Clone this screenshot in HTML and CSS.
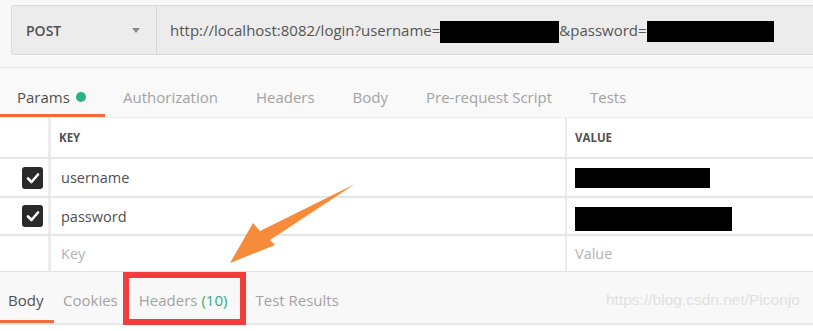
FILE: index.html
```html
<!DOCTYPE html>
<html>
<head>
<meta charset="utf-8">
<link rel="stylesheet" href="styles.css">
</head>
<body>
<div class="page">
  <div class="top">
    <div class="reqbar">
      <div class="method"><span>POST</span><span class="caret"></span></div>
      <div class="url">http://localhost:8082/login?username=<span class="redact r1"></span>&amp;password=<span class="redact r2"></span></div>
    </div>
  </div>
  <div class="tabs">
    <div class="tab active">Params <span class="dot"></span></div>
    <div class="tab">Authorization</div>
    <div class="tab">Headers</div>
    <div class="tab">Body</div>
    <div class="tab">Pre-request Script</div>
    <div class="tab">Tests</div>
  </div>
  <div class="table">
    <div class="row head">
      <div class="cb"></div>
      <div class="key">KEY</div>
      <div class="val">VALUE</div>
    </div>
    <div class="row r-user">
      <div class="cb"><span class="check"><svg viewBox="0 0 20 20" width="20" height="20"><path d="M5 10.5 L8.5 14 L15 6.5" fill="none" stroke="#fff" stroke-width="2.6" stroke-linecap="round" stroke-linejoin="round"/></svg></span></div>
      <div class="key">username</div>
      <div class="val"><span class="redact v1"></span></div>
    </div>
    <div class="row r-pass">
      <div class="cb"><span class="check"><svg viewBox="0 0 20 20" width="20" height="20"><path d="M5 10.5 L8.5 14 L15 6.5" fill="none" stroke="#fff" stroke-width="2.6" stroke-linecap="round" stroke-linejoin="round"/></svg></span></div>
      <div class="key">password</div>
      <div class="val"><span class="redact v2"></span></div>
    </div>
    <div class="row r-empty">
      <div class="cb"></div>
      <div class="key ph">Key</div>
      <div class="val ph">Value</div>
    </div>
  </div>
  <div class="resp">
    <div class="rtabs">
      <div class="rtab active">Body</div>
      <div class="rtab">Cookies</div>
      <div class="rtab">Headers <span class="count">(10)</span></div>
      <div class="rtab">Test Results</div>
      <div class="watermark">https://blog.csdn.net/Piconjo</div>
    </div>
  </div>
  <div class="redbox"></div>
  <svg class="arrow" width="130" height="85" viewBox="0 0 130 85">
    <polygon points="125,1 40,57 45,62 0,80 23,40 30,48" fill="#f68b3a"/>
  </svg>
</div>
</body>
</html>
```
FILE: styles.css
```css
* { box-sizing: border-box; }
html, body { margin: 0; padding: 0; background: #fff; }
body { font-family: "Open Sans", "Noto Sans", sans-serif; color: #505050; }
.page { position: relative; width: 813px; height: 331px; overflow: hidden; background: #fff; }

.top { height: 68px; background: #f8f8f8; padding: 5px 0 0 11px; border-bottom: 1px solid #e3e3e3; }
.reqbar { display: flex; height: 50px; background: #ececec; border: 1px solid #dadada; border-right: none; border-radius: 3px 0 0 3px; }
.method { width: 145px; display: flex; align-items: center; justify-content: space-between; padding: 0 16px 0 14px; border-right: 1px solid #d6d6d6; font-size: 14px; font-weight: 600; color: #505050; }
.caret { width: 0; height: 0; border-left: 4px solid transparent; border-right: 4px solid transparent; border-top: 5px solid #8a8a8a; }
.url { display: flex; align-items: center; padding-left: 13px; font-size: 15px; color: #555; white-space: nowrap; }
.redact { display: inline-block; background: #000; }
.r1 { width: 119px; height: 22px; margin-top: 4px; }
.r2 { width: 127px; height: 21px; margin-top: 3px; }

.tabs { display: flex; height: 49px; background: #f9f9f9; }
.tab { display: flex; align-items: center; padding: 8px 19px 0; font-size: 15px; color: #a3a3a3; height: 100%; }
.tab:nth-child(1) { padding-left: 17px; width: 105px; border-bottom: 3px solid #f26b3a; color: #505050; padding-top: 11px; }
.tab:nth-child(2) { padding-left: 18px; }
.dot { display: inline-block; width: 10px; height: 10px; border-radius: 50%; background: #26b47f; margin-left: 6px; }

.table { border-top: 1px solid #ececec; }
.row { display: flex; border-bottom: 2px solid #e6e6e6; }
.row.head { height: 41px; }
.row.r-user { height: 39px; }
.row.r-pass { height: 38px; }
.row.r-empty { height: 35px; border-bottom: none; }
.cb { width: 51px; border-right: 3px solid #ececec; display: flex; align-items: center; justify-content: flex-end; padding-right: 5px; flex: none; }
.key { width: 516px; border-right: 2px solid #ececec; display: flex; align-items: center; padding-left: 10px; font-size: 14.5px; color: #505050; flex: none; }
.val { flex: 1; display: flex; align-items: center; padding-left: 8px; font-size: 14.5px; }
.head .key, .head .val { font-size: 11.5px; font-weight: 700; color: #505050; }
.head .key { padding-left: 8px; }
.ph { color: #b3b3b3; }
.check { width: 21px; height: 22px; background: #2a2a2a; border-radius: 3px; display: flex; align-items: center; justify-content: center; }
.v1 { width: 135px; height: 20px; }
.v2 { width: 157px; height: 24px; margin-top: 6px; }

.resp { background: #f8f8f8; height: 54px; border-top: 1px solid #e3e3e3; border-bottom: 2px solid #e8e8e8; }
.rtabs { display: flex; height: 51px; align-items: stretch; position: relative; }
.rtab { display: flex; align-items: center; padding: 5px 10px 0; font-size: 15px; color: #a3a3a3; }
.rtab.active { color: #505050; padding-left: 8px; width: 54px; border-bottom: 3px solid #f26b3a; padding-top: 8px; }
.rtab:nth-child(2) { padding-left: 9px; }
.rtab:nth-child(3) { padding-left: 11px; padding-right: 18px; }
.count { color: #2bb07b; margin-left: 4px; }
.watermark { position: absolute; left: 606px; top: 19px; font-family: "Liberation Sans", Arial, sans-serif; font-size: 15.5px; color: #e0e0e0; }

.redbox { position: absolute; left: 123px; top: 272px; width: 123px; height: 53px; border: 6px solid #f43c3c; }
.arrow { position: absolute; left: 230px; top: 183px; }
```
